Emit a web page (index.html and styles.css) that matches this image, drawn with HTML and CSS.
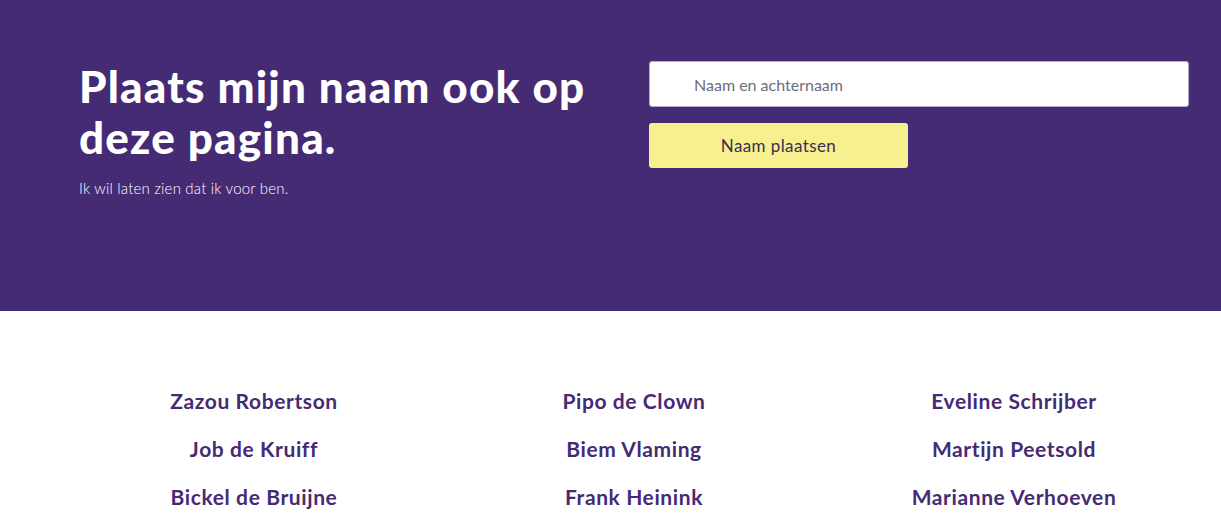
FILE: index.html
```html
<!DOCTYPE html>
<html lang="nl">
<head>
<meta charset="utf-8">
<title>Plaats mijn naam</title>
<link rel="stylesheet" href="styles.css">
</head>
<body>
<header class="hero">
  <div class="container hero-row">
    <div class="hero-text">
      <h1 class="title">Plaats mijn naam ook op deze pagina.</h1>
      <p class="subtitle">Ik wil laten zien dat ik voor ben.</p>
    </div>
    <form class="hero-form">
      <input class="name-input" type="text" placeholder="Naam en achternaam">
      <button class="submit" type="button">Naam plaatsen</button>
    </form>
  </div>
</header>
<main class="names">
  <div class="container names-grid">
    <div class="name">Zazou Robertson</div>
    <div class="name">Pipo de Clown</div>
    <div class="name">Eveline Schrijber</div>
    <div class="name">Job de Kruiff</div>
    <div class="name">Biem Vlaming</div>
    <div class="name">Martijn Peetsold</div>
    <div class="name">Bickel de Bruijne</div>
    <div class="name">Frank Heinink</div>
    <div class="name">Marianne Verhoeven</div>
  </div>
</main>
</body>
</html>
```

FILE: styles.css
```css
* { box-sizing: border-box; }
html, body { margin: 0; padding: 0; }
body {
  font-family: Lato, "Open Sans", sans-serif;
  background: #ffffff;
  overflow: hidden;
}
.container {
  width: 1140px;
  margin-left: 64px;
  padding: 0 15px;
}
.hero {
  background: #452a74;
  height: 311px;
  padding-top: 61px;
}
.hero-row {
  display: flex;
  gap: 30px;
}
.hero-text {
  width: 540px;
}
.title {
  margin: 0;
  color: #ffffff;
  font-family: Lato, sans-serif;
  font-weight: 900;
  font-size: 44px;
  line-height: 51px;
  letter-spacing: 1.2px;
}
.subtitle {
  margin: 15px 0 0;
  color: #ffffff;
  font-family: Lato, sans-serif;
  font-weight: 300;
  font-size: 15px;
  line-height: 20px;
  letter-spacing: 0.2px;
}
.hero-form {
  width: 540px;
  display: flex;
  flex-direction: column;
  align-items: flex-start;
  gap: 16px;
}
.name-input {
  width: 540px;
  height: 46px;
  border: 1px solid #b7abd3;
  border-radius: 3px;
  background: #ffffff;
  padding: 0 0 0 44px;
  font-family: Lato, sans-serif;
  font-size: 16px;
  color: #333;
  outline: none;
}
.name-input::placeholder { color: #6d6d78; }
.submit {
  width: 259px;
  height: 45px;
  border: none;
  border-radius: 3px;
  background: #f7f08e;
  color: #3d2b56;
  font-family: Lato, sans-serif;
  font-weight: 400;
  font-size: 17px;
  letter-spacing: 0.4px;
  cursor: pointer;
}
.names {
  padding-top: 66px;
}
.names-grid {
  display: grid;
  grid-template-columns: repeat(3, 1fr);
  padding: 0;
}
.name {
  text-align: center;
  color: #452a74;
  font-family: Lato, sans-serif;
  font-weight: 700;
  font-size: 21px;
  line-height: 48px;
  letter-spacing: 0.6px;
}
```
